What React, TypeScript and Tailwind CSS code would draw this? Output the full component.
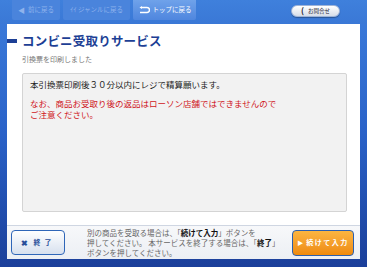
import React from 'react';

const jp = { fontFamily: '"Noto Sans CJK JP", "Noto Sans", sans-serif' };

const NavButton = ({ label, icon, active = false }: { label: string; icon: React.ReactNode; active?: boolean }) => (
    <div
        className={`h-[20px] flex items-center justify-center gap-[3px] rounded-b-[2px] text-[6.5px] ${
            active
                ? 'bg-gradient-to-b from-[#6fa2ea] to-[#4f86de] text-white'
                : 'bg-[#4a84dc] text-[#8fb3ec]'
        }`}
    >
        {icon}
        <span>{label}</span>
    </div>
);

export default function App() {
    return (
        <div
            className="w-[367px] h-[267px] overflow-hidden flex flex-col bg-gradient-to-b from-[#3d7ddc] via-[#2a62c8] to-[#1b3f9a]"
            style={jp}
        >
            {/* top nav */}
            <div className="h-[24px] flex items-start pl-[12px] pr-[27px] gap-[3px] bg-gradient-to-b from-[#3f80dc] to-[#3a78d6]">
                <div className="w-[48px]">
                    <NavButton label="前に戻る" icon={<span className="text-[7px]">◀</span>} />
                </div>
                <div className="w-[67px]">
                    <NavButton label="ｲｲ ジャンルに戻る" icon={null} />
                </div>
                <div className="w-[63px]">
                    <NavButton
                        label="トップに戻る"
                        active
                        icon={
                            <svg width="12" height="8" viewBox="0 0 12 8">
                                <path d="M4 1.5h5a2.5 2.5 0 0 1 0 5H2" fill="none" stroke="white" strokeWidth="1.5" />
                                <path d="M4 0 1.5 1.5 4 3z" fill="white" />
                            </svg>
                        }
                    />
                </div>
                <div className="flex-1" />
                <div className="mt-[5px] w-[49px] h-[12px] rounded-full bg-gradient-to-b from-white to-[#d6dde8] border border-[#9fb4d8] flex items-center justify-center gap-[4px] text-[5.5px] text-[#223] shadow-[0_1px_1px_rgba(0,0,0,0.3)]">
                    <span className="text-[8px] leading-none font-bold">(</span>
                    <span>お問合せ</span>
                </div>
            </div>

            {/* main panel */}
            <div className="ml-[7px] w-[353px] h-[235px] bg-white flex flex-col">
                <div className="flex items-center mt-[10px] h-[14px]">
                    <div className="w-[10px] h-[4px] bg-[#1d3f95]" />
                    <h1 className="ml-[5px] text-[12.5px] font-bold text-[#1d3f95] leading-none tracking-[0.2px]">
                        コンビニ受取りサービス
                    </h1>
                </div>
                <p className="ml-[15px] mt-[8px] text-[7px] text-[#777] leading-none">引換票を印刷しました</p>
                <div className="ml-[15px] mt-[10px] w-[325px] h-[139px] bg-[#f2f2f2] border border-[#d4d4d4] rounded-[2px] px-[7px] pt-[5px] text-[8.5px] leading-[11px]">
                    <p className="text-[#222]">本引換票印刷後３０分以内にレジで精算願います。</p>
                    <p className="mt-[8px] text-[#d0161b]">
                        なお、商品お受取り後の返品はローソン店舗ではできませんので
                        <br />
                        ご注意ください。
                    </p>
                </div>
                <div className="mt-[13px] flex-1 border-t border-[#cfd6e2] bg-gradient-to-b from-[#f7f8fa] to-[#eceff4] flex items-center px-[4px]">
                    <div className="w-[54px] h-[25px] rounded-[4px] border-[1.5px] border-[#2f66b8] bg-gradient-to-b from-white to-[#d7e0ee] flex items-center justify-center gap-[6px] text-[7px] font-bold text-[#2a4f9a]">
                        <span className="text-[8px]">✖</span>
                        <span className="tracking-[4px]">終了</span>
                    </div>
                    <div className="ml-[22px] text-[7.5px] leading-[10px] text-[#666]">
                        <p>
                            別の商品を受取る場合は、「<b className="text-[#111]">続けて入力</b>」ボタンを
                        </p>
                        <p>
                            押してください。 本サービスを終了する場合は、「<b className="text-[#111]">終了</b>」
                        </p>
                        <p>ボタンを押してください。</p>
                    </div>
                    <div className="flex-1" />
                    <div className="mr-[2px] w-[62px] h-[26px] rounded-[4px] border-[1.5px] border-[#2b5fae] bg-gradient-to-b from-[#fbb540] to-[#ee8a0c] flex items-center justify-center gap-[3px] text-[7px] text-white font-bold">
                        <span className="text-[6px]">▶</span>
                        <span className="tracking-[1.5px]">続けて入力</span>
                    </div>
                </div>
            </div>
        </div>
    );
}
